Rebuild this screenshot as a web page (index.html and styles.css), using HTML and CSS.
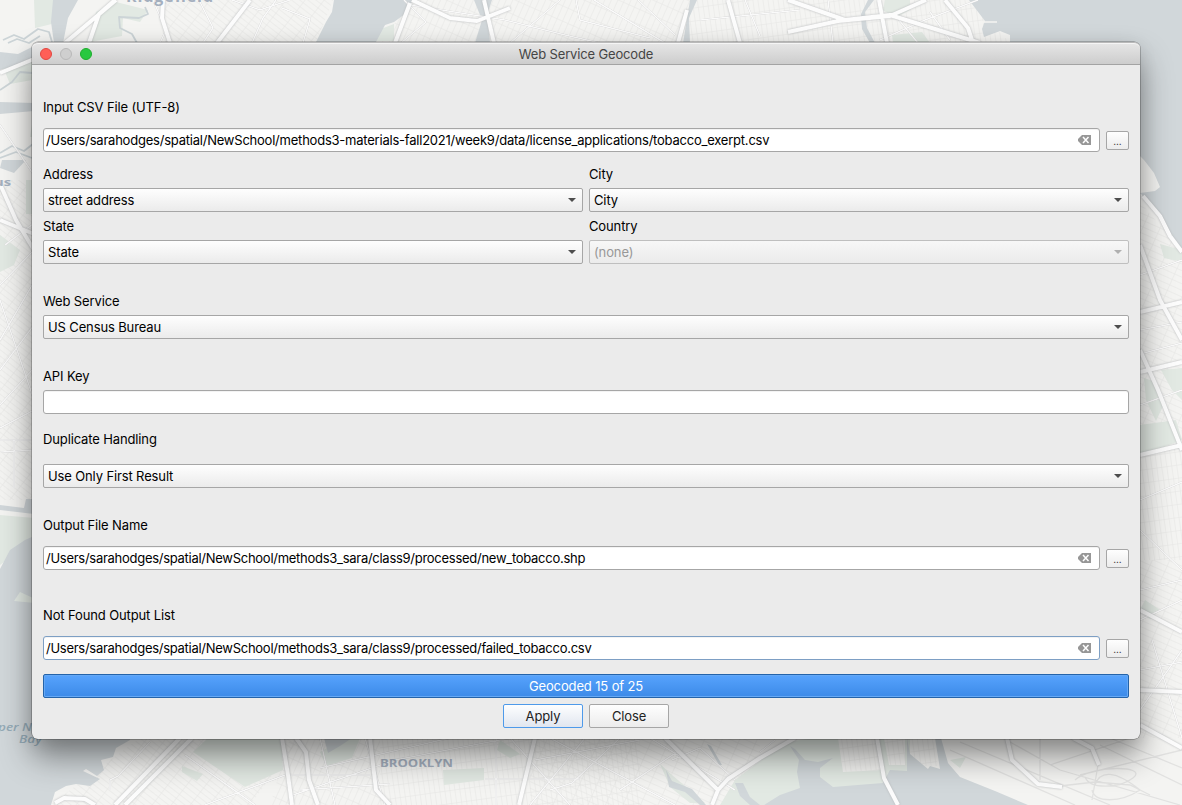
FILE: index.html
```html
<!DOCTYPE html>
<html lang="en">
<head>
<meta charset="utf-8">
<title>Web Service Geocode</title>
<link rel="stylesheet" href="styles.css">
</head>
<body>
<svg class="map" viewBox="0 0 1182 805" aria-hidden="true">
  <defs>
    <pattern id="g1" width="16" height="6" patternUnits="userSpaceOnUse" patternTransform="rotate(24)"><path class="grid" d="M0 0H16M0 0V6"/></pattern>
    <pattern id="g2" width="6" height="14" patternUnits="userSpaceOnUse" patternTransform="rotate(24)"><path class="grid" d="M0 0H6M0 0V14"/></pattern>
    <pattern id="g3" width="5" height="13" patternUnits="userSpaceOnUse" patternTransform="rotate(-8)"><path class="grid" d="M0 0H5M0 0V13"/></pattern>
    <pattern id="g4" width="15" height="5" patternUnits="userSpaceOnUse" patternTransform="rotate(38)"><path class="grid" d="M0 0H15M0 0V5"/></pattern>
  </defs>
  <rect class="land" width="1182" height="805"/>
  <!-- street grids -->
  <path fill="url(#g4)" d="M160 0H333L316 43H165ZM0 180H34V500H0ZM50 805L140 738H300L250 805Z"/>
  <path fill="url(#g2)" d="M412 0H690L682 43H380ZM270 805L290 738H380V805Z"/>
  <path fill="url(#g3)" d="M690 0H970L1010 43H682ZM380 738H640V805H380ZM1138 430H1182V560H1138Z"/>
  <path fill="url(#g1)" d="M1138 200L1182 250V430H1138ZM1138 560H1182V738H1138ZM530 738H760V805H530Z"/>
  <!-- parks -->
  <g class="park">
    <path d="M34 0H62L52 24L35 28ZM116 2L148 10L140 22L123 18L122 36L90 42L96 12ZM0 60L32 62V80L10 84ZM0 235L20 250L14 265L0 272ZM26 180H33V214H26ZM0 515L34 518V540L0 565ZM10 595L22 598L24 603L14 601ZM375 41L378 30L394 24V41Z"/>
    <path d="M208 738H281L283 770L245 787L193 752ZM182 766L203 774L197 781L182 772ZM320 752L345 738H360L352 758L326 766ZM443 770L484 768V780L444 785ZM885 0H910V10L895 18L883 10ZM892 35L922 32L930 43H893Z"/>
    <path d="M1144 378L1153 381L1163 406L1156 421L1146 400ZM1161 370L1182 368V400L1172 390ZM1140 425L1176 420L1182 440L1140 456ZM1160 244L1182 250V262L1164 258ZM1145 600L1160 610L1150 619L1140 610Z"/>
    <path d="M720 805L735 780L785 742L815 738H910V772L884 787L800 792L764 805Z"/>
    <path d="M500 740L520 754L510 758L497 750ZM660 764L672 775L705 803H690L670 787ZM950 760L966 757L960 768ZM60 120L80 116L66 135L30 137L33 118Z"/>
  </g>
  <path class="land" d="M838 738L843 772L882 770L875 738ZM884 738H905V765H889Z"/>
  <path fill="url(#g3)" d="M838 738L843 772L882 770L875 738ZM884 738H933L938 766H889Z"/>
  <!-- rivers and bays -->
  <g class="water">
    <path d="M53 0H78L68 18L63 43H54L51 22ZM0 52L18 54L32 47V60L0 70ZM0 102L34 103V111L0 114ZM334 0H413L405 14L394 22L385 25L376 42H316L326 22L332 12ZM474 0H492L487 15L490 43H475L482 20ZM690 0H697L689 18L690 43H683L687 19Z"/>
    <path d="M969 0H1182V249L1170 238L1160 218L1145 198L1140 193L1155 191L1160 187L1154 173L1144 160L1138 154V43H1010V35L1000 31L984 37L982 29L985 21ZM868 0H874L865 12L867 28L875 43H870L862 29L861 14ZM2 160H26L14 173L0 168Z"/>
    <path d="M0 505L24 508L26 499H34V514L0 510ZM34 536L25 540L10 550L0 569V805H51L55 792L66 786L76 784L90 786L100 779L83 771L86 769L97 776L104 770L101 760L113 757L116 748L130 740V738H34Z"/>
    <path d="M764 805L780 795L800 788L797 772L799 760L790 746L795 749L805 760L818 762L833 758L820 768L820 777L833 787L883 783L890 770L907 771L907 738L910 754L928 769L930 766L940 769L935 738H941L948 763L960 777L995 791L1028 805ZM735 783H743L750 797L760 805H750L740 796Z"/>
    <path d="M666 770L672 781L692 789L706 805H700L685 792L669 787ZM324 738H352L340 746L328 753ZM707 744L711 746L722 765H719Z"/>
  </g>
  <path class="park" d="M20 592L33 598L35 603L14 601Z"/>
  <!-- creeks -->
  <path class="creek" d="M3 40L14 35L24 39L38 29L49 32L52 42M8 43L17 39L29 43L40 36M145 7L148 14L139 18L119 17L120 28L132 34L137 43M0 153L12 146L24 151L33 144M0 158L16 152L32 158M0 90L12 82L20 72L32 73"/>
  <!-- minor roads -->
  <path class="minor" d="M153 0L166 30L160 43M199 0L213 28L203 43M232 0L260 10L290 0M252 43L263 18L276 0M282 8L310 19L303 43M404 0L426 22L401 43M410 5L505 20L565 35L600 43M510 43L560 0M576 0L580 20L650 38M594 0L665 43M638 0L675 35M700 20L800 10M745 0L760 36M880 40L925 20L978 0M828 0L833 43M899 20L918 43M930 12L950 40M0 125L34 175M5 245L33 224M0 285L34 250M0 340L34 282M0 370L34 325M0 405L34 368M0 300L34 400M0 428L34 410M0 440H34M1 452L34 450M14 440V488M1140 275L1182 260M1140 330L1182 322M1140 354L1182 343M1140 405L1182 390M1140 500L1182 482M1140 530L1182 570M1140 590L1182 580M1140 620L1182 600M1140 670L1182 662M1152 640L1182 738M1140 710L1182 650"/>
  <path class="minor" d="M110 790V780L118 776L150 742M185 755L255 805M205 805L245 790L285 775M320 768L450 738M290 796L395 760L510 738M290 775H370M300 790L390 784M365 738L385 805M320 738L335 805M496 738V805M510 738L570 805M530 805L585 738M485 779H580M535 760L640 740M550 738L675 805M620 790L680 750M550 790L572 783L620 738M650 738L735 790M672 760L700 748L735 780M760 752L775 740"/>
  <path class="faint" d="M950 750L1075 805M960 742L1110 805M1010 742L1060 770L1180 805M1040 738V780M1050 765L1130 738M1080 775L1182 750M1100 745L1182 785M1110 738L1182 768M1060 786L1095 782L1130 785L1150 795M1075 780C1090 765 1150 765 1133 778C1120 788 1090 790 1085 777M1095 785C1100 770 1115 770 1140 790C1120 803 1095 803 1092 790M1098 765L1092 800"/>
  <!-- highways -->
  <g class="roads">
    <path d="M65 43L116 0M89 43L99 14L115 0M0 73L34 59M0 184L16 220L34 250M0 220L34 234M163 0L162 18L170 43M217 43L250 0M410 3L395 43M412 0L450 18L477 21L510 8M484 0L494 43M728 0L740 43M788 0L845 20L890 15L980 43M788 32L838 21L890 16L926 0M879 0L887 43M945 0L968 28L973 43M678 43L687 10M1143 196L1160 216L1170 236L1182 252M1140 245L1160 300L1182 340M1140 350L1158 390L1182 450M1140 372L1182 362M1140 312L1182 302M1140 455L1182 445M1140 690L1182 692M1140 610L1182 632M1140 725L1182 748"/>
    <path d="M55 803L64 798L85 799L95 805M115 805L180 738M125 805L192 738M282 738L288 775L292 805M296 738L306 752L309 780L318 805M370 738L376 790L390 805M535 738L519 805M665 738L718 790L712 805M718 790L728 779L760 758L795 738M877 738L884 778L898 805M1007 738L1012 760L1038 784L1062 787M1073 738L1092 748L1099 765"/>
  </g>
  <path class="pier" d="M980 22H997"/>
  <g class="place">
    <text x="126" y="2" textLength="87">Ridgefield</text>
    <text class="small" x="-6" y="186" textLength="17" lengthAdjust="spacingAndGlyphs">us</text>
    <text class="small" x="380" y="767" textLength="73" lengthAdjust="spacingAndGlyphs">BROOKLYN</text>
    <text class="bay" x="-2" y="731" textLength="34" lengthAdjust="spacingAndGlyphs">per N</text>
    <text class="bay" x="19" y="743" textLength="23" lengthAdjust="spacingAndGlyphs">Bay</text>
  </g>
</svg>

<main class="window">
  <header class="titlebar">
    <div class="lights"><i class="light red"></i><i class="light off"></i><i class="light green"></i></div>
    <h1 class="title">Web Service Geocode</h1>
  </header>
  <form class="form">
    <section class="group">
      <label class="label">Input CSV File (UTF-8)</label>
      <div class="file-row">
        <div class="input"><span class="path-csv">/Users/sarahodges/spatial/NewSchool/methods3-materials-fall2021/week9/data/license_applications/tobacco_exerpt.csv</span><svg class="clear" viewBox="0 0 13 10"><path d="M4 0H13V10H4L0 6V4Z" fill="#979797"/><path d="M5 2L10.500 8M10.500 2L5 8" stroke="#fff" stroke-width="1.500"/></svg></div>
        <button class="browse" type="button">...</button>
      </div>
    </section>
    <section class="fields">
      <div class="field"><label class="label">Address</label><div class="select"><span>street address</span><i class="arrow"></i></div></div>
      <div class="field"><label class="label">City</label><div class="select"><span>City</span><i class="arrow"></i></div></div>
      <div class="field"><label class="label">State</label><div class="select"><span>State</span><i class="arrow"></i></div></div>
      <div class="field"><label class="label">Country</label><div class="select disabled"><span>(none)</span><i class="arrow"></i></div></div>
    </section>
    <section class="field spaced"><label class="label">Web Service</label><div class="select"><span>US Census Bureau</span><i class="arrow"></i></div></section>
    <section class="field spaced"><label class="label">API Key</label><div class="input"></div></section>
    <section class="group duplicate"><label class="label">Duplicate Handling</label><div class="select"><span>Use Only First Result</span><i class="arrow"></i></div></section>
    <section class="group spaced">
      <label class="label">Output File Name</label>
      <div class="file-row">
        <div class="input"><span class="path-out">/Users/sarahodges/spatial/NewSchool/methods3_sara/class9/processed/new_tobacco.shp</span><svg class="clear" viewBox="0 0 13 10"><path d="M4 0H13V10H4L0 6V4Z" fill="#979797"/><path d="M5 2L10.500 8M10.500 2L5 8" stroke="#fff" stroke-width="1.500"/></svg></div>
        <button class="browse" type="button">...</button>
      </div>
    </section>
    <section class="group not-found">
      <label class="label">Not Found Output List</label>
      <div class="file-row">
        <div class="input focused"><span class="path-out">/Users/sarahodges/spatial/NewSchool/methods3_sara/class9/processed/failed_tobacco.csv</span><svg class="clear" viewBox="0 0 13 10"><path d="M4 0H13V10H4L0 6V4Z" fill="#979797"/><path d="M5 2L10.500 8M10.500 2L5 8" stroke="#fff" stroke-width="1.500"/></svg></div>
        <button class="browse" type="button">...</button>
      </div>
    </section>
    <div class="progress"><span>Geocoded 15 of 25</span></div>
    <div class="actions"><button class="button primary" type="button">Apply</button><button class="button" type="button">Close</button></div>
  </form>
</main>
</body>
</html>
```
FILE: styles.css
```css
* { box-sizing: border-box; }
body {
  margin: 0;
  width: 1182px;
  height: 805px;
  padding: 42px 42px 0 32px;
  overflow: hidden;
  font: 13px/16px Inter, "Liberation Sans", sans-serif;
  letter-spacing: -.13px;
  color: #000;
}
.map { position: absolute; inset: 0; width: 1182px; height: 805px; letter-spacing: 0; }
.land { fill: #f4f4f2; }
.grid { fill: none; stroke: #e5e5e4; stroke-width: 1; }
.park { fill: #e2e9e3; }
.water { fill: #d1d7da; }
.creek { fill: none; stroke: #ccd4d7; stroke-width: 1.8; stroke-linejoin: round; }
.minor { fill: none; stroke: #fafafa; stroke-width: 1.6; filter: drop-shadow(0 0 .7px #b9b9b9); }
.faint { fill: none; stroke: #e2e2e1; stroke-width: 1.3; }
.roads { fill: none; stroke: #fcfcfc; stroke-width: 4; stroke-linejoin: round; filter: drop-shadow(0 0 .8px #b4b6b8); }
.pier { stroke: #f4f4f2; stroke-width: 1.5; }
.place { fill: #a4afbe; font: 700 16px "Open Sans", sans-serif; }
.place .small { font-size: 10px; }
.place .bay { fill: #95abb7; font: italic 600 10px "Open Sans", sans-serif; }

.window {
  position: relative;
  width: 1108px;
  height: 697px;
  border-radius: 6px;
  background: #ebebeb;
  box-shadow: 0 0 0 .5px rgba(0,0,0,.4), 0 18px 32px rgba(0,0,0,.42), 0 4px 18px rgba(0,0,0,.1);
}
.titlebar {
  display: grid;
  grid-template-columns: 72px 1fr 72px;
  align-items: center;
  height: 23px;
  border-radius: 6px 6px 0 0;
  border-top: 1px solid #b9b9b9;
  border-bottom: 1px solid #a3a3a3;
  background: linear-gradient(#e6e6e6, #cdcdcd);
  box-shadow: inset 0 1px #f5f5f5;
}
.lights { display: flex; gap: 8px; padding-left: 8px; }
.light { width: 12px; height: 12px; border-radius: 50%; }
.red { background: #ff5f57; border: 1px solid #e2463f; }
.off { background: #cfcfcf; border: 1px solid #b9b9b9; }
.green { background: #28c840; border: 1px solid #1dad2b; }
.title { margin: 0; text-align: center; font: inherit; color: #454545; letter-spacing: -.15px; padding-top: 1px; }

.form { padding: 34px 11px 11px; }
.label { display: block; }
.field { display: flex; flex-direction: column; gap: 6px; }
.group { display: flex; flex-direction: column; gap: 13px; }
.fields { display: grid; grid-template-columns: 540px 540px; gap: 6px; margin-top: 14px; }
.spaced { margin-top: 29px; }
.duplicate { margin-top: 17px; gap: 17px; }
.not-found { margin-top: 37px; }
.file-row { display: grid; grid-template-columns: 1fr 23px; gap: 6px; align-items: center; }
.input, .select {
  display: flex;
  align-items: center;
  justify-content: space-between;
  height: 24px;
  border: 1px solid #a6a6a6;
  border-radius: 3px;
  white-space: nowrap;
}
.input { padding: 0 8px 0 2px; background: #fff; box-shadow: inset 0 1px #f3f3f3; }
.path-csv { letter-spacing: -.222px; }
.path-out { letter-spacing: -.275px; }
.focused { border-color: #7d9fc4; }
.select { padding: 0 6px 0 4px; border-radius: 2px; background: linear-gradient(#fefefe, #ebebeb); }
.disabled { border-color: #bfbfbf; color: #989898; background: linear-gradient(#f7f7f7, #ebebeb); }
.arrow { width: 8px; height: 4px; background: #4d4d4d; clip-path: polygon(0 0, 100% 0, 50% 100%); }
.disabled .arrow { background: #b0b0b0; }
.clear { width: 13px; height: 10px; }
.browse, .button {
  display: block;
  border: 1px solid #a6a6a6;
  border-radius: 2px;
  background: linear-gradient(#fefefe, #ececec);
  font: inherit;
  letter-spacing: inherit;
  color: #222;
  padding: 0;
}
.browse { width: 23px; height: 19px; margin-top: 1px; font-size: 10px; line-height: 16px; }
.progress {
  display: flex;
  align-items: center;
  justify-content: center;
  height: 24px;
  margin-top: 14px;
  border: 1px solid #2463a9;
  border-radius: 2px;
  background: linear-gradient(#57a3fd, #3c8ae8);
  box-shadow: inset 0 0 0 1px #65a8f5;
  color: #fff;
}
.actions { display: flex; justify-content: center; gap: 6px; margin-top: 6px; }
.button { width: 80px; height: 24px; }
.primary { border-color: #4e9aea; background: linear-gradient(#fdfeff, #e1e6ef); }
```
